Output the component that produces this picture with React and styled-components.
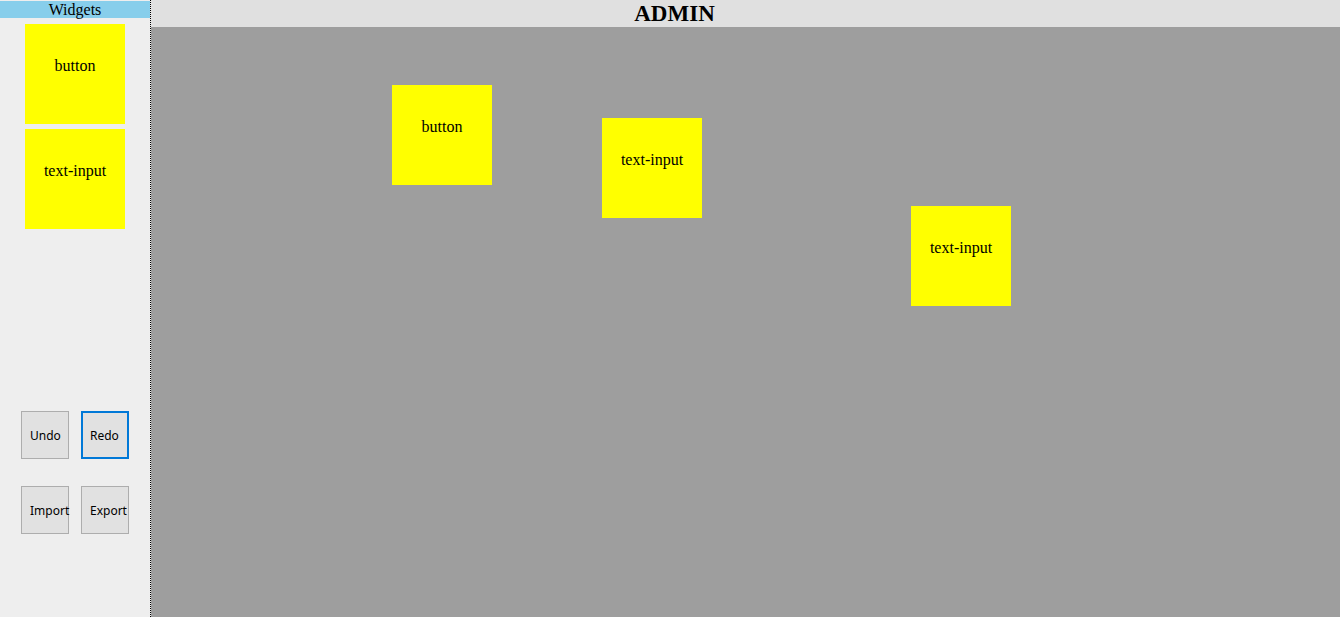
import styled, { createGlobalStyle } from "styled-components"

const GlobalStyle = createGlobalStyle`
  html, body, #root {
    margin: 0;
    padding: 0;
    height: 100%;
  }
  body {
    font-family: "Liberation Serif", "Times New Roman", serif;
    overflow: hidden;
  }
`

const palette = ["button", "text-input"]

const placed = [
  { id: 1, type: "button", x: 241, y: 58 },
  { id: 2, type: "text-input", x: 451, y: 91 },
  { id: 3, type: "text-input", x: 760, y: 179 },
]

export default function App() {
  return (
    <>
      <GlobalStyle />
      <Layout>
        <Sidebar>
          <SidebarTitle>Widgets</SidebarTitle>
          <WidgetList>
            {palette.map((w) => (
              <Widget key={w}>{w}</Widget>
            ))}
          </WidgetList>
          <Controls>
            <ButtonRow>
              <ToolButton>Undo</ToolButton>
              <ToolButton active>Redo</ToolButton>
            </ButtonRow>
            <ButtonRow>
              <ToolButton>Import</ToolButton>
              <ToolButton>Export</ToolButton>
            </ButtonRow>
          </Controls>
        </Sidebar>
        <Main>
          <Header>ADMIN</Header>
          <Canvas>
            {placed.map((w) => (
              <CanvasWidget key={w.id} style={{ left: w.x, top: w.y }}>
                {w.type}
              </CanvasWidget>
            ))}
          </Canvas>
        </Main>
      </Layout>
    </>
  )
}

const Layout = styled.div`
  display: flex;
  width: 100%;
  height: 100vh;
`

const Sidebar = styled.div`
  display: flex;
  flex-direction: column;
  width: 150px;
  flex-shrink: 0;
  padding-top: 1px;
  background: #eeeeee;
  border-right: 1px dotted #000;
`

const SidebarTitle = styled.div`
  height: 17px;
  line-height: 18px;
  background: #87ceeb;
  text-align: center;
  font-size: 16px;
  color: #000;
`

const WidgetList = styled.div`
  display: flex;
  flex-direction: column;
  align-items: center;
  gap: 5px;
  margin-top: 6px;
`

const Widget = styled.div`
  box-sizing: border-box;
  width: 100px;
  height: 100px;
  padding-top: 33px;
  background: #ffff00;
  text-align: center;
  font-size: 16px;
  line-height: 18px;
  color: #000;
`

const Controls = styled.div`
  display: flex;
  flex-direction: column;
  gap: 27px;
  margin-top: 182px;
  padding-left: 21px;
`

const ButtonRow = styled.div`
  display: flex;
  gap: 12px;
`

const ToolButton = styled.button`
  box-sizing: border-box;
  width: 48px;
  height: 48px;
  padding: 0 0 0 ${(p) => (p.active ? "7px" : "8px")};
  background: #e1e1e1;
  border: ${(p) => (p.active ? "2px solid #0078d7" : "1px solid #adadad")};
  border-radius: 0;
  font-family: "Noto Sans", "DejaVu Sans", sans-serif;
  font-size: 12px;
  color: #000;
  white-space: nowrap;
  display: flex;
  align-items: center;
  justify-content: flex-start;
`

const Main = styled.div`
  display: flex;
  flex-direction: column;
  flex: 1;
  min-width: 0;
`

const Header = styled.div`
  height: 27px;
  line-height: 27px;
  padding-right: 142px;
  background: #e0e0e0;
  text-align: center;
  font-size: 23px;
  font-weight: bold;
  color: #000;
`

const Canvas = styled.div`
  position: relative;
  flex: 1;
  background: #9e9e9e;
`

const CanvasWidget = styled.div`
  position: absolute;
  box-sizing: border-box;
  width: 100px;
  height: 100px;
  padding-top: 33px;
  background: #ffff00;
  text-align: center;
  font-size: 16px;
  line-height: 18px;
  color: #000;
`
